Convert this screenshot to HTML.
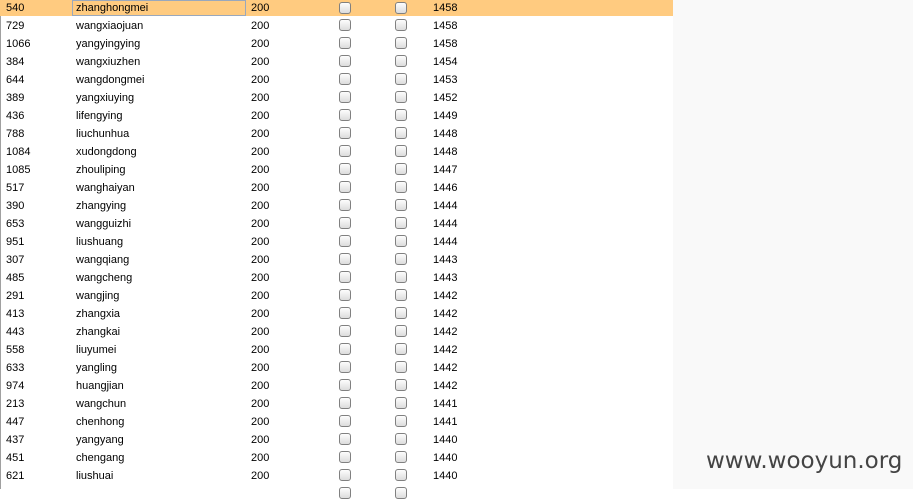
<!DOCTYPE html>
<html><head><meta charset="utf-8"><style>
html,body{margin:0;padding:0;width:913px;height:489px;overflow:hidden;background:#fff;font-family:"Liberation Sans",Arial,sans-serif;font-size:11px;color:#000}
#left{position:absolute;left:0;top:0;width:673px;height:489px;border-left:1px solid #a0a0a0;box-sizing:border-box}
#right{position:absolute;left:673px;top:0;width:240px;height:489px;background:#f9f9f9}
.r{position:absolute;left:0;width:673px;height:18px}
.r span{position:absolute;top:1px;line-height:18px;white-space:nowrap}
.hl{background:#ffcb80;height:16px}
.hl span{line-height:16px;top:0}
.nb{position:absolute;left:72px;top:0;width:172px;height:14px;border:1px solid #9aa8bc}
.cb{position:absolute;top:3px;width:10px;height:10px;border:1px solid #808080;border-radius:3px;background:linear-gradient(#fdfdfd,#dcdcdc)}
.hl .cb{top:2px}
#wm{position:absolute;left:706px;top:446px;font-family:"DejaVu Sans",sans-serif;font-size:23px;color:#444;line-height:30px;white-space:nowrap}
</style></head><body>
<div id="left"></div>
<div id="right"></div>
<div id="rows"></div>
<div id="wm">www.wooyun.org</div>
<script>
var d=[["540","zhanghongmei","1458"],["729","wangxiaojuan","1458"],["1066","yangyingying","1458"],["384","wangxiuzhen","1454"],["644","wangdongmei","1453"],["389","yangxiuying","1452"],["436","lifengying","1449"],["788","liuchunhua","1448"],["1084","xudongdong","1448"],["1085","zhouliping","1447"],["517","wanghaiyan","1446"],["390","zhangying","1444"],["653","wangguizhi","1444"],["951","liushuang","1444"],["307","wangqiang","1443"],["485","wangcheng","1443"],["291","wangjing","1442"],["413","zhangxia","1442"],["443","zhangkai","1442"],["558","liuyumei","1442"],["633","yangling","1442"],["974","huangjian","1442"],["213","wangchun","1441"],["447","chenhong","1441"],["437","yangyang","1440"],["451","chengang","1440"],["621","liushuai","1440"],["","",""]];
var h="";
for(var i=0;i<d.length;i++){
var t=i==0?0:18*i-2;
h+='<div class="r'+(i==0?' hl':'')+'" style="top:'+t+'px">'+(i==0?'<div class="nb"></div>':'')+
'<span style="left:6px">'+d[i][0]+'</span><span style="left:76px">'+d[i][1]+'</span>'+
(d[i][0]?'<span style="left:251px">200</span>':'')+
'<div class="cb" style="left:339px"></div><div class="cb" style="left:395px"></div>'+
'<span style="left:433px">'+d[i][2]+'</span></div>';
}
document.getElementById("rows").innerHTML=h;
</script>
</body></html>
